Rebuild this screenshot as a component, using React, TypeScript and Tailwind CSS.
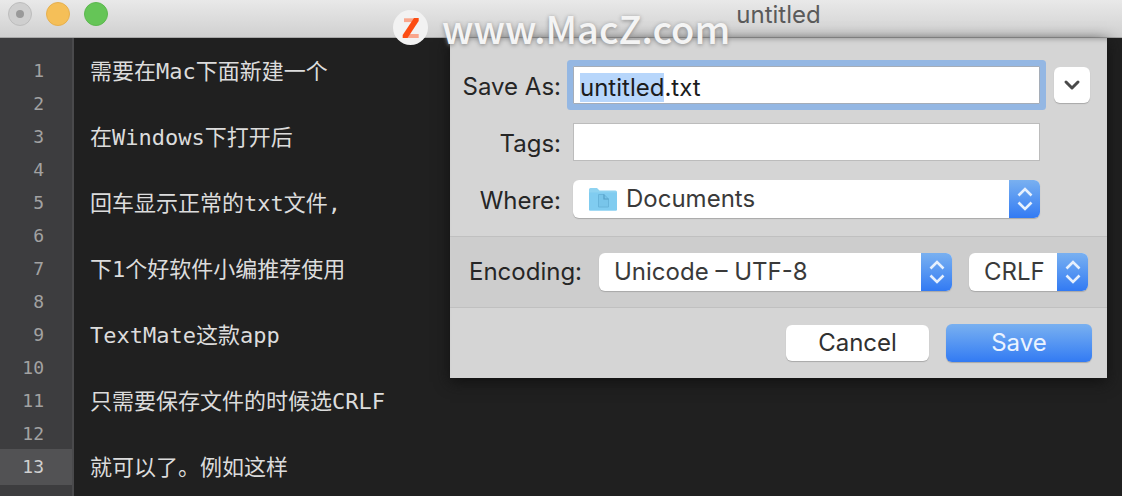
import React, { useEffect, useRef } from 'react';
import { ChevronDown } from 'lucide-react';

const lines = [
    '需要在Mac下面新建一个',
    '',
    '在Windows下打开后',
    '',
    '回车显示正常的txt文件,',
    '',
    '下1个好软件小编推荐使用',
    '',
    'TextMate这款app',
    '',
    '只需要保存文件的时候选CRLF',
    '',
    '就可以了。例如这样',
];

const currentLine = 13;

const rowHeight = (line: string) => (line ? 'h-9' : 'h-[30px]');

const FolderIcon: React.FC = () => (
    <svg viewBox="0 0 28 24" className="w-7 h-6" aria-hidden="true">
        <path d="M0 2.5Q0 1 1.5 1H8l2.5 2.500H26.5Q28 3.500 28 5V22.5Q28 23.500 27 23.500H1Q0 23.500 0 22.500Z" fill="#8fd3f1" />
        <path d="M0 5.500H28V22.5Q28 23.500 27 23.500H1Q0 23.500 0 22.500Z" fill="#80ccf0" />
        <path d="M9.500 7.500H15L19.500 12V20H9.500Z" fill="#78c5ea" stroke="#68b4da" strokeWidth="1" />
        <path d="M15 7.500V12H19.500" fill="none" stroke="#559fc6" strokeWidth="1.200" />
    </svg>
);

const MacZLogo: React.FC = () => (
    <svg viewBox="0 0 36 36" className="w-9 h-9" aria-hidden="true">
        <circle cx="18.500" cy="17.500" r="17.500" fill="#f2f2f2" />
        <path d="M12 10.200H24" stroke="#f9a68c" strokeWidth="3.800" />
        <path d="M13 26H26.700" stroke="#f9a68c" strokeWidth="4" />
        <path d="M10.700 28V25L22 8H26.700V11L15.500 28Z" fill="#fc4c12" />
    </svg>
);

const Stepper: React.FC = () => (
    <span className="absolute inset-y-0 right-0 w-[31px] rounded-r-md bg-linear-to-b from-[#79b0f0] to-[#327af3] flex items-center justify-center pointer-events-none">
        <svg viewBox="0 0 16 24" className="w-4 h-6" fill="none" stroke="#e6f0fd" strokeWidth="2.600" aria-hidden="true">
            <path d="M1.500 8.500L8 2L14.500 8.500" />
            <path d="M1.500 15.500L8 22L14.500 15.500" />
        </svg>
    </span>
);

interface PopupProps {
    id: string;
    label?: string;
    options: string[];
    className?: string;
    padding?: string;
    icon?: React.ReactNode;
}

const Popup: React.FC<PopupProps> = ({ id, label, options, className = '', padding = 'pl-[15px]', icon }) => (
    <div className={`relative h-[38px] ${className}`}>
        <select
            id={id}
            aria-label={label}
            className={`appearance-none w-full h-full rounded-md bg-white shadow-[0_1px_1px_#a8a8a8] text-[#3a3a3a] outline-none ${padding}`}
        >
            {options.map(option => (
                <option key={option}>{option}</option>
            ))}
        </select>
        {icon && <span className="absolute left-4 inset-y-0 flex items-center pointer-events-none">{icon}</span>}
        <Stepper />
    </div>
);

const SaveSheet: React.FC = () => {
    const nameRef = useRef<HTMLInputElement>(null);

    // Only the base name is selected, the extension stays as it is
    useEffect(() => {
        nameRef.current?.focus();
        nameRef.current?.setSelectionRange(0, 'untitled'.length);
    }, []);

    return (
        <form
            onSubmit={e => e.preventDefault()}
            className="absolute top-0 left-[450px] right-[15px] bg-[#d5d5d5] text-2xl text-[#262626] shadow-[inset_0_5px_5px_-4px_#9a9a9a,0_4px_14px_#111]"
        >
            <div className="grid grid-cols-[111px_1fr_38px] gap-x-3 gap-y-[19px] items-center pt-7 pb-[18px] pr-[17px]">
                <label htmlFor="name" className="pt-1 text-right whitespace-nowrap">Save As:</label>
                <input
                    id="name"
                    ref={nameRef}
                    type="text"
                    defaultValue="untitled.txt"
                    className="min-w-0 h-[38px] px-1.5 pt-1 bg-white border border-[#a5adb8] rounded-[1px] ring-[6px] ring-[#94b7e3] outline-none text-[#1c1c1c] selection:bg-[#b7d6fb] selection:text-[#1c1c1c]"
                />
                <button type="button" aria-label="Collapse" className="justify-self-end w-9 h-9 rounded-md bg-white shadow-[0_1px_1px_#a8a8a8] flex items-center justify-center">
                    <ChevronDown className="w-6 h-6 text-[#4a4a4a]" strokeWidth={3} />
                </button>

                <label htmlFor="tags" className="pt-1 text-right whitespace-nowrap">Tags:</label>
                <input id="tags" type="text" className="min-w-0 h-[38px] px-1.5 bg-white border border-[#bcbcbc] outline-none" />

                <label htmlFor="where" className="col-start-1 pt-1 text-right whitespace-nowrap">Where:</label>
                <Popup id="where" options={['Documents']} padding="pl-[53px]" icon={<FolderIcon />} />
            </div>

            <div className="flex items-center h-[72px] pl-[19px] pr-[19px] bg-[#cdcdcd] border-y border-[#c0c0c0]">
                <label htmlFor="encoding" className="w-[112px] mr-[18px] whitespace-nowrap">Encoding:</label>
                <Popup id="encoding" options={['Unicode – UTF-8']} className="flex-1 mr-[17px]" />
                <Popup id="line-endings" label="Line endings" options={['CRLF']} className="w-[119px]" />
            </div>

            <div className="flex items-center justify-end gap-[17px] h-[70px] pr-[15px]">
                <button type="button" className="w-[143px] h-9 rounded-md bg-white shadow-[0_1px_1px_#a8a8a8] text-[#303030]">Cancel</button>
                <button type="submit" className="w-[146px] h-[38px] rounded-md bg-linear-to-b from-[#79b0f0] to-[#327af3] shadow-[0_1px_1px_#a8a8a8] text-[#eaf3ff]">Save</button>
            </div>
        </form>
    );
};

const App: React.FC = () => {
    return (
        <div className="relative min-h-screen flex flex-col bg-[#202020] font-['Inter','Liberation_Sans',sans-serif]">
            <header className="h-[38px] flex bg-linear-to-b from-[#e9e9e9] to-[#d0d0d0] border-b border-[#a8a8a8]">
                <div className="w-[450px] flex gap-[14px] pl-2 pt-[2px]">
                    <button type="button" aria-label="Close" className="w-6 h-6 rounded-full bg-[#cfcfcf] border border-[#bdbdbd] flex items-center justify-center">
                        <span className="w-2 h-2 rounded-full bg-[#999]" />
                    </button>
                    <button type="button" aria-label="Minimize" className="w-6 h-6 rounded-full bg-[#f5bf58] border border-[#e6b04f]" />
                    <button type="button" aria-label="Zoom" className="w-6 h-6 rounded-full bg-[#65c557] border border-[#5cb84f]" />
                </div>
                <h1 className="flex-1 pr-[15px] text-center text-2xl leading-[30px] text-[#5a5a5a]">untitled</h1>
            </header>

            <main className="relative flex-1 flex">
                <div className="w-[74px] pt-[15px] bg-[#3d3d3f] border-r-2 border-[#4a4a4c] text-right text-lg text-[#a2a2a2] font-['DejaVu_Sans_Mono',monospace]">
                    {lines.map((line, i) => (
                        <div
                            key={i}
                            className={`pr-7 flex items-center justify-end ${rowHeight(line)} ${i + 1 === currentLine ? 'bg-[#525254] text-[#d0d0d0]' : ''}`}
                        >
                            {i + 1}
                        </div>
                    ))}
                </div>
                <div className="flex-1 pt-[15px] pl-4 text-[22px] text-[#dcdcdc] whitespace-pre font-['DejaVu_Sans_Mono','Noto_Sans_CJK_SC',monospace]">
                    {lines.map((line, i) => (
                        <div key={i} className={`flex items-center ${rowHeight(line)}`}>{line}</div>
                    ))}
                </div>
                <SaveSheet />
            </main>

            <div className="absolute top-[10px] left-[392px] flex items-center gap-[14px] pointer-events-none">
                <MacZLogo />
                <span className="text-[38px] leading-8 font-medium text-[#f4f4f4] [text-shadow:0_1px_4px_#888] font-['Noto_Sans_CJK_SC',sans-serif]">www.MacZ.com</span>
            </div>
        </div>
    );
};

export default App;
